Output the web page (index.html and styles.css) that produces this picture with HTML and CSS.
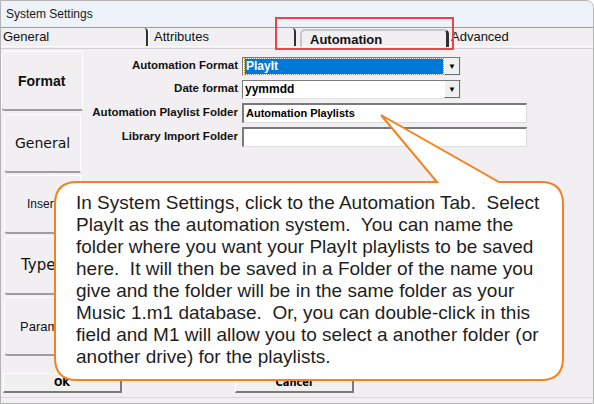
FILE: index.html
```html
<!DOCTYPE html>
<html lang="en">
<head>
  <meta charset="UTF-8" />
  <title>System Settings</title>
  <link rel="stylesheet" href="styles.css">
</head>
<body>

  <div class="window">
    <!-- Title Bar -->
    <div class="title-bar">System Settings</div>

    <!-- Top Tabs -->
    <div class="tab-strip">
      <div class="tab tab-general">General</div>
      <div class="tab tab-attributes">Attributes</div>
      <div class="tab tab-automation active">Automation</div>
      <div class="tab tab-advanced">Advanced</div>
    </div>
    <div class="tab-rule"></div>

    <div class="page">
      <!-- Side Tabs -->
      <div class="side-tabs">
        <div class="side-tab selected"><span class="st-format">Format</span></div>
        <div class="side-tab"><span class="st-general">General</span></div>
        <div class="side-tab"><span class="st-insert">Insert</span></div>
        <div class="side-tab"><span class="st-type">Type</span></div>
        <div class="side-tab"><span class="st-param">Param</span></div>
      </div>

      <!-- Settings Form -->
      <div class="form">
        <div class="row">
          <label>Automation Format</label>
          <div class="combo focused">
            <div class="combo-value"><span>PlayIt</span></div>
            <div class="combo-btn">&#9660;</div>
          </div>
        </div>
        <div class="row">
          <label>Date format</label>
          <div class="combo">
            <div class="combo-value"><span>yymmdd</span></div>
            <div class="combo-btn">&#9660;</div>
          </div>
        </div>
        <div class="row">
          <label>Automation Playlist Folder</label>
          <div class="field">Automation Playlists</div>
        </div>
        <div class="row">
          <label>Library Import Folder</label>
          <div class="field"></div>
        </div>
      </div>
    </div>

    <!-- Buttons -->
    <div class="button-row">
      <button class="dlg-button">OK</button>
      <button class="dlg-button cancel">Cancel</button>
    </div>
    <div class="bottom-strip"></div>

    <!-- Highlight around the Automation tab -->
    <div class="highlight"></div>

    <!-- Callout -->
    <svg class="callout-shape" width="594" height="404" viewBox="0 0 594 404">
      <path d="M77,182 H437 L381,115 L499,182 H541 Q563,182 563,204 V358 Q563,380 541,380 H77 Q55,380 55,358 V204 Q55,182 77,182 Z"
            fill="#ffffff" stroke="#f5821f" stroke-width="2" stroke-linejoin="miter"/>
    </svg>
    <div class="callout-text">In System Settings, click to the Automation Tab.&nbsp; Select<br>PlayIt as the automation system.&nbsp; You can name the<br>folder where you want your PlayIt playlists to be saved<br>here.&nbsp; It will then be saved in a Folder of the name you<br>give and the folder will be in the same folder as your<br>Music 1.m1 database.&nbsp; Or, you can double-click in this<br>field and M1 will allow you to select a another folder (or<br>another drive) for the playlists.</div>
  </div>

</body>
</html>
```

FILE: styles.css
```css
body {
  margin: 0;
  padding: 0;
  background-color: #ffffff;
  font-family: 'Liberation Sans', Arial, sans-serif;
}

.window {
  position: relative;
  width: 594px;
  height: 404px;
  box-sizing: border-box;
  border: 1px solid #b4b4b4;
  border-radius: 0 8px 0 0;
  background-color: #f1eff2;
  overflow: hidden;
}

.title-bar {
  height: 26px;
  line-height: 26px;
  padding-left: 5px;
  font-size: 12px;
  color: #1a1a1a;
  background-color: #eef3fa;
  border-bottom: 1px solid #9c9c9c;
}

/* top tabs */
.tab-strip {
  display: flex;
  height: 18px;
  background-color: #f1eff2;
}

.tab {
  position: relative;
  height: 18px;
  line-height: 18px;
  font-size: 13px;
  color: #111;
  box-sizing: border-box;
}

.tab-general {
  width: 147px;
  padding-left: 2px;
  border-right: 2px solid #303030;
  border-top-right-radius: 4px;
}

.tab-attributes {
  width: 148px;
  padding-left: 5px;
  border-left: 1px solid #ffffff;
  border-right: 2px solid #303030;
  border-top-right-radius: 4px;
}

.tab-automation {
  width: 149px;
  margin-left: 4px;
  padding-left: 8px;
  font-weight: bold;
  border: 2px solid #c8c8c8;
  border-bottom: none;
  border-right: 3px solid #303030;
  border-radius: 5px 5px 0 0;
  margin-top: 1px;
}

.tab-advanced {
  padding-left: 2px;
}

.tab-rule {
  height: 3px;
  border-top: 1px solid #ffffff;
  border-bottom: 1px solid #cfcfcf;
  box-sizing: border-box;
}

/* body of the page */
.page {
  display: flex;
  height: 322px;
}

.side-tabs {
  width: 82px;
  display: flex;
  flex-direction: column;
  padding-top: 2px;
}

.side-tab {
  height: 59px;
  margin: 0 2px 2px 3px;
  box-sizing: border-box;
  border-left: 1px solid #ffffff;
  border-top: 1px solid #ffffff;
  border-bottom: 2px solid #9e9e9e;
  border-right: 1px solid #ffffff;
  border-radius: 5px 0 0 4px;
  display: flex;
  align-items: center;
  color: #111;
}

.side-tab.selected {
  margin: 0 0 3px 0;
  height: 60px;
}

.st-format {
  font-weight: bold;
  font-size: 14px;
  padding-left: 16px;
}

.st-general {
  font-family: 'DejaVu Sans', sans-serif;
  font-size: 14px;
  padding-left: 10px;
}

.st-insert {
  font-size: 12px;
  padding-left: 22px;
}

.st-type {
  font-family: 'DejaVu Sans', sans-serif;
  font-size: 15px;
  padding-left: 16px;
}

.st-param {
  font-size: 13px;
  padding-left: 15px;
}

/* form */
.form {
  display: flex;
  flex-direction: column;
  gap: 4px;
  padding-top: 8px;
}

.row {
  display: flex;
  align-items: center;
  gap: 4px;
}

.row label {
  width: 155px;
  margin-top: -3px;
  text-align: right;
  font-size: 11.5px;
  font-weight: bold;
  color: #111;
}

.combo {
  display: flex;
  width: 219px;
  height: 19px;
  box-sizing: border-box;
  border-top: 1px solid #7a7a7a;
  border-left: 1px solid #7a7a7a;
  border-bottom: 1px solid #e6e6e6;
  border-right: 1px solid #e6e6e6;
  background-color: #ffffff;
}

.combo-value {
  flex: 1;
  padding: 1px 1px 1px 2px;
  font-size: 12px;
  font-weight: bold;
  line-height: 15px;
  color: #000;
}

.combo.focused .combo-value span {
  display: block;
  height: 15px;
  padding-left: 1px;
  background-color: #0078d7;
  color: #ffffff;
  outline: 1px dotted #f08000;
}

.combo-btn {
  width: 16px;
  font-size: 8px;
  line-height: 17px;
  text-align: center;
  color: #000;
  background-color: #f0f0f0;
  border-left: 1px solid #ffffff;
  border-right: 1px solid #6e6e6e;
  border-bottom: 1px solid #6e6e6e;
  box-sizing: border-box;
}

.field {
  width: 285px;
  height: 20px;
  box-sizing: border-box;
  border-top: 2px solid #7a7a7a;
  border-left: 2px solid #7a7a7a;
  border-bottom: 1px solid #dcdcdc;
  border-right: 1px solid #dcdcdc;
  background-color: #ffffff;
  font-size: 11px;
  font-weight: bold;
  line-height: 16px;
  padding-left: 2px;
  color: #000;
}

/* buttons */
.button-row {
  display: flex;
  gap: 113px;
  padding: 2px 0 0 2px;
}

.dlg-button {
  width: 119px;
  height: 20px;
  padding: 0;
  font-family: 'DejaVu Sans Condensed', 'DejaVu Sans', sans-serif;
  font-size: 11px;
  font-weight: bold;
  color: #000;
  background-color: #f0f0f0;
  border-top: 1px solid #ffffff;
  border-left: 1px solid #ffffff;
  border-right: 2px solid #7a7a7a;
  border-bottom: 2px solid #7a7a7a;
  border-radius: 0;
}

.bottom-strip {
  margin-top: 4px;
  border-top: 1px solid #d8d8d8;
}

/* overlays */
.highlight {
  position: absolute;
  left: 274px;
  top: 16px;
  width: 175px;
  height: 29px;
  border: 2px solid #e84646;
}

.callout-shape {
  position: absolute;
  left: -1px;
  top: -1px;
}

.callout-text {
  position: absolute;
  left: 75px;
  top: 191px;
  font-size: 19px;
  line-height: 22px;
  color: #1e1e1e;
  white-space: nowrap;
}
```
